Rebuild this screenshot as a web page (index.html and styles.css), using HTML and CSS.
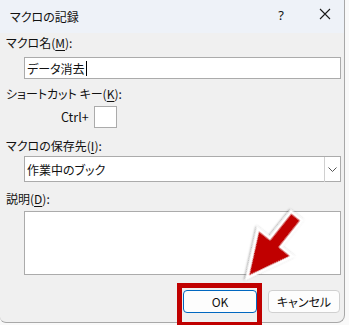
FILE: index.html
```html
<!DOCTYPE html>
<html lang="ja">
<head>
<meta charset="utf-8">
<title>マクロの記録</title>
<link rel="stylesheet" href="styles.css">
</head>
<body>
<div class="window">
  <div class="titlebar">
    <span class="title">マクロの記録</span>
    <span class="help">?</span>
    <span class="close">
      <svg width="12" height="12" viewBox="0 0 12 12"><path d="M1 1 L11 11 M11 1 L1 11" stroke="#1a1a1a" stroke-width="1.1" fill="none"/></svg>
    </span>
  </div>
  <div class="content">
    <div class="label l1">マクロ名(<u>M</u>):</div>
    <div class="field name"><span>データ消去</span><span class="caret"></span></div>
    <div class="label l2">ショートカット キー(<u>K</u>):</div>
    <div class="shortcut"><span class="ctrl">Ctrl+</span><div class="keybox"></div></div>
    <div class="label l3">マクロの保存先(<u>I</u>):</div>
    <div class="field select"><span>作業中のブック</span>
      <div class="dropbtn"><svg width="9" height="5" viewBox="0 0 9 5"><path d="M0.5 0.5 L4.5 4.5 L8.5 0.5" stroke="#555" stroke-width="1" fill="none"/></svg></div>
    </div>
    <div class="label l4">説明(<u>D</u>):</div>
    <div class="field desc"></div>
    <div class="buttons">
      <button class="btn ok">OK</button>
      <button class="btn cancel">キャンセル</button>
    </div>
  </div>
</div>
<div class="highlight"></div>
<svg class="arrow" width="349" height="325" viewBox="0 0 349 325">
  <defs>
    <filter id="sh" x="-20%" y="-20%" width="140%" height="140%">
      <feDropShadow dx="0.5" dy="1" stdDeviation="1.3" flood-color="#000" flood-opacity="0.4"/>
    </filter>
  </defs>
  <polygon points="0,-7 34,-7 34,-22 79,0 34,22 34,7 0,7" transform="translate(296.5,216) rotate(128.6)" fill="#c00000" stroke="#fff" stroke-width="3" stroke-linejoin="miter" filter="url(#sh)"/>
</svg>
</body>
</html>
```
FILE: styles.css
```css
html, body {
  margin: 0;
  padding: 0;
}
body {
  width: 349px;
  height: 325px;
  background: #f9f9f9;
  font-family: "Noto Sans CJK JP", "Noto Sans", sans-serif;
  font-feature-settings: "palt";
  font-size: 12px;
  color: #111;
  overflow: hidden;
}
.window {
  width: 344px;
  height: 322px;
  background: #f0f0f0;
  border-right: 1px solid #a8a8a8;
  border-bottom: 1px solid #a8a8a8;
  border-bottom-right-radius: 8px;
  border-bottom-left-radius: 6px;
  overflow: hidden;
}
.titlebar {
  height: 33px;
  background: #eef2f8;
  display: flex;
  align-items: center;
  padding: 0 9px 0 10px;
  box-sizing: border-box;
}
.title {
  flex: 1;
  font-size: 12px;
  line-height: 16px;
  margin-top: 0;
}
.help {
  width: 20px;
  text-align: center;
  margin-right: 24px;
  font-family: "Noto Sans", sans-serif;
  font-size: 13px;
  line-height: 16px;
  margin-top: -3px;
}
.close {
  width: 20px;
  height: 14px;
  display: flex;
  justify-content: center;
  align-items: center;
  margin-top: -5px;
}
.content {
  padding: 0 3px 0 6px;
  display: flex;
  flex-direction: column;
}
.label {
  line-height: 16px;
  height: 16px;
}
.label u {
  text-underline-offset: 2px;
}
.l1 { margin-top: 2px; }
.l2 { margin-top: 7px; }
.l3 { margin-top: 10px; }
.l4 { margin-top: 9px; }
.field {
  margin-left: 18px;
  background: #fff;
  border: 1px solid #ababab;
  box-sizing: border-box;
  display: flex;
  align-items: center;
  padding-left: 2px;
}
.name {
  margin-top: 6px;
  height: 22px;
}
.caret {
  width: 1px;
  height: 15px;
  background: #000;
  margin-left: 1px;
}
.shortcut {
  margin-top: 4px;
  margin-left: 55px;
  display: flex;
  align-items: center;
  gap: 5px;
}
.ctrl {
  line-height: 16px;
  font-size: 12.5px;
}
.keybox {
  width: 23px;
  height: 22px;
  background: #fff;
  border: 1px solid #ababab;
  box-sizing: border-box;
}
.select {
  margin-top: 2px;
  height: 26px;
  justify-content: space-between;
}
.dropbtn {
  width: 16px;
  height: 25px;
  border-left: 1px solid #d0d0d0;
  box-sizing: border-box;
  display: flex;
  align-items: center;
  justify-content: center;
  align-self: flex-start;
}
.desc {
  margin-top: 4px;
  height: 64px;
}
.buttons {
  margin-top: 15px;
  display: flex;
  justify-content: flex-end;
  gap: 11px;
  padding-right: 1px;
}
.btn {
  font-family: "Noto Sans CJK JP", "Noto Sans", sans-serif;
  font-feature-settings: "palt";
  font-size: 12px;
  color: #111;
  height: 23px;
  background: #fdfdfd;
  border: 1px solid #d0d0d0;
  border-radius: 4px;
  padding: 0;
  box-sizing: border-box;
}
.ok {
  width: 74px;
  border-color: #0067c0;
}
.cancel {
  width: 72px;
}
.highlight {
  position: absolute;
  left: 177px;
  top: 283px;
  width: 85px;
  height: 44px;
  border: 5px solid #c00000;
  box-sizing: border-box;
}
.arrow {
  position: absolute;
  left: 0;
  top: 0;
  pointer-events: none;
}
```
